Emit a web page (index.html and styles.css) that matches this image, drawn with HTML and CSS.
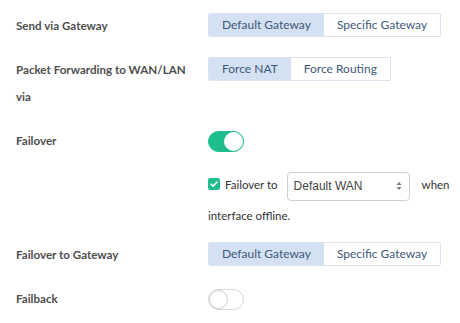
FILE: index.html
```html
<!DOCTYPE html>
<html>
<head>
<meta charset="utf-8">
<link rel="stylesheet" href="styles.css">
</head>
<body>
<div class="form">
  <div class="row">
    <div class="label">Send via Gateway</div>
    <div class="control">
      <div class="seg">
        <span class="seg-item active">Default Gateway</span>
        <span class="seg-item">Specific Gateway</span>
      </div>
    </div>
  </div>
  <div class="row">
    <div class="label">Packet Forwarding to WAN/LAN via</div>
    <div class="control">
      <div class="seg">
        <span class="seg-item active">Force NAT</span>
        <span class="seg-item">Force Routing</span>
      </div>
    </div>
  </div>
  <div class="row">
    <div class="label">Failover</div>
    <div class="control">
      <span class="toggle on"><span class="knob"></span></span>
    </div>
  </div>
  <div class="sub">
    <span class="check"><svg width="12" height="12" viewBox="0 0 12 12"><path d="M3 6.2 L5.1 8.2 L9 4" fill="none" stroke="#fff" stroke-width="1.6" stroke-linecap="round" stroke-linejoin="round"/></svg></span><span class="txt">Failover to</span><span class="select">Default WAN<svg class="arrows" width="6" height="10" viewBox="0 0 6 10"><path d="M3 1 L5.5 4 H0.5 Z M3 9 L5.5 6 H0.5 Z" fill="#777"/></svg></span>when interface offline.
  </div>
  <div class="row">
    <div class="label">Failover to Gateway</div>
    <div class="control">
      <div class="seg">
        <span class="seg-item active">Default Gateway</span>
        <span class="seg-item">Specific Gateway</span>
      </div>
    </div>
  </div>
  <div class="row">
    <div class="label">Failback</div>
    <div class="control">
      <span class="toggle"><span class="knob"></span></span>
    </div>
  </div>
</div>
</body>
</html>
```
FILE: styles.css
```css
html, body {
  margin: 0;
  padding: 0;
  background: #fff;
}
.form {
  padding: 12px 8px 0 16px;
  font-family: Lato, "Open Sans", sans-serif;
}
.row {
  display: grid;
  grid-template-columns: 176px 1fr;
  column-gap: 16px;
  margin-bottom: 17px;
}
.label {
  font-family: Lato, "Open Sans", sans-serif;
  font-weight: 700;
  font-size: 11.6px;
  line-height: 27px;
  color: #4e4e4e;
}
.control {
  display: flex;
  align-items: flex-start;
  padding-top: 1px;
}
.seg {
  display: flex;
  border: 1px solid #dbe3ee;
  border-radius: 2px;
  overflow: hidden;
}
.seg-item {
  height: 22px;
  line-height: 22px;
  padding: 0 13px;
  font-size: 12px;
  white-space: nowrap;
  color: #41597a;
  background: #fff;
}
.seg-item.active {
  background: #d3e1f3;
}
.toggle {
  position: relative;
  display: block;
  width: 34px;
  height: 19px;
  margin-top: 3px;
  border-radius: 11px;
  border: 1px solid #d6d6d6;
  background: #fff;
}
.toggle.on {
  background: #1dbd8d;
  border-color: #1dbd8d;
}
.knob {
  position: absolute;
  top: 0;
  left: 0;
  width: 17px;
  height: 17px;
  border-radius: 50%;
  background: #fff;
  border: 1px solid #d0d0d0;
}
.toggle.on .knob {
  left: 15px;
  border-color: #fff;
}
.sub {
  margin: -1px 0 11px 192px;
  font-size: 11.5px;
  color: #333;
  line-height: 29px;
}
.check {
  display: inline-block;
  width: 12px;
  height: 12px;
  border-radius: 2px;
  background: #1dbd8d;
  vertical-align: -1px;
  margin-right: 5px;
}
.check svg {
  display: block;
}
.txt {
  margin-right: 9px;
}
.select {
  display: inline-flex;
  align-items: center;
  justify-content: space-between;
  box-sizing: border-box;
  width: 123px;
  height: 29px;
  padding: 0 7px 0 6px;
  margin-right: 12px;
  border: 1px solid #cfcfcf;
  border-radius: 4px;
  font-family: "Liberation Sans", Arial, sans-serif;
  font-size: 12px;
  color: #444;
  vertical-align: middle;
  line-height: 27px;
}
.arrows {
  display: block;
}
```
